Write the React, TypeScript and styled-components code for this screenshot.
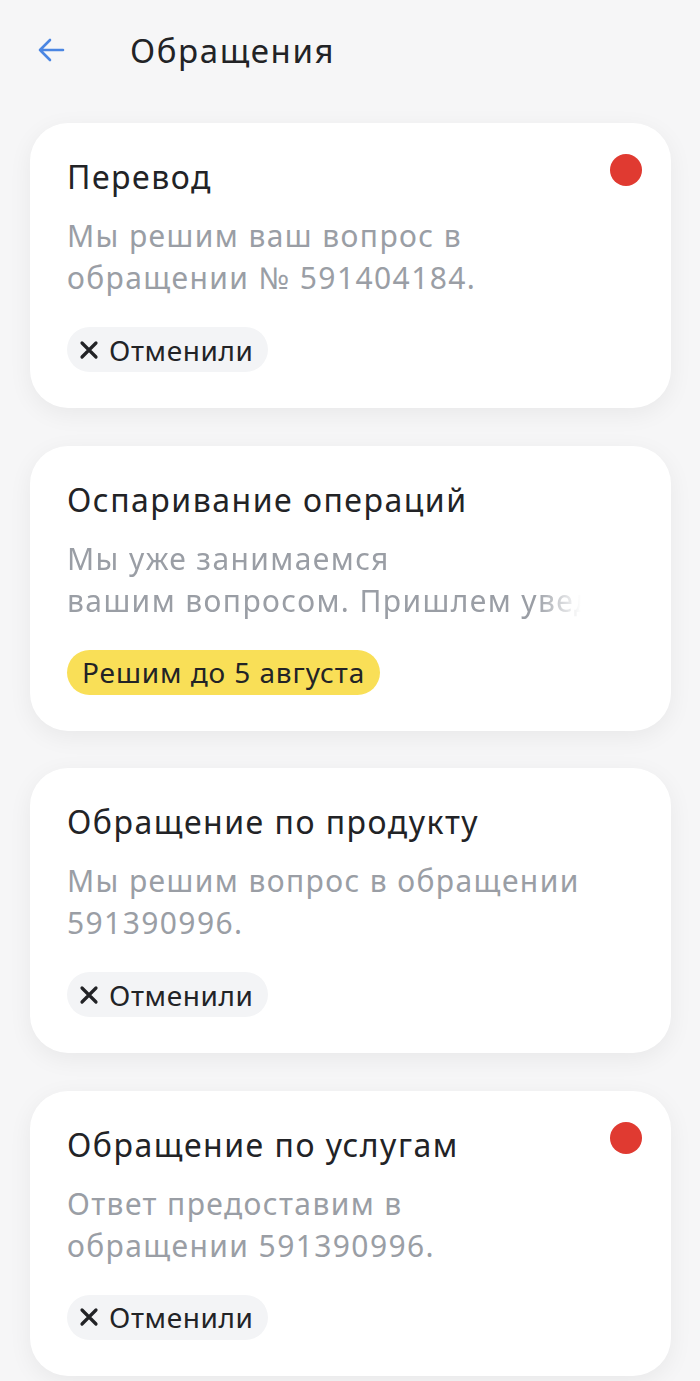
import styled, { createGlobalStyle } from "styled-components";

const GlobalStyle = createGlobalStyle`
    html, body {
        margin: 0;
        padding: 0;
        background-color: #F6F6F7;
    }

    body {
        font-family: "Noto Sans", Roboto, "Liberation Sans", sans-serif;
        -webkit-font-smoothing: antialiased;
    }
`;

const Page = styled.div`
    width: 700px;
    min-height: 1381px;
    background-color: #F6F6F7;
`;

const Header = styled.header`
    display: flex;
    align-items: center;
    height: 100px;
    padding: 0 0 0 37px;
    box-sizing: border-box;
`;

const BackButton = styled.button`
    display: flex;
    align-items: center;
    justify-content: center;
    width: 28px;
    height: 28px;
    padding: 0;
    margin: 0 65px 0 0;
    border: none;
    background: none;
    color: #4B86E2;
`;

const PageTitle = styled.h1`
    margin: 0;
    font-size: 33px;
    font-weight: 400;
    letter-spacing: 1.6px;
    color: #222326;
`;

const List = styled.div`
    display: flex;
    flex-direction: column;
    gap: 37.5px;
    padding: 23px 29px 0 30px;
`;

const Card = styled.div`
    position: relative;
    background-color: #FFFFFF;
    border-radius: 38px;
    padding: 34px 36px 36px 37px;
    box-shadow: 0 6px 24px rgba(0, 0, 0, 0.06);
`;

const Title = styled.h2`
    margin: 0;
    font-size: 32px;
    line-height: 40px;
    font-weight: 400;
    letter-spacing: 1.5px;
    color: #222326;
`;

const Dot = styled.span`
    position: absolute;
    top: 31px;
    right: 29px;
    width: 32px;
    height: 32px;
    border-radius: 50%;
    background-color: #E03A31;
`;

const Description = styled.div<{ $fade?: boolean }>`
    margin-top: 18px;
    width: 514px;
    font-size: 30px;
    line-height: 42px;
    letter-spacing: 1.4px;
    color: #9A9EA5;
    overflow: hidden;
    ${({ $fade }) =>
        $fade &&
        `
        -webkit-mask-image: linear-gradient(to right, #000 calc(100% - 46px), transparent);
        mask-image: linear-gradient(to right, #000 calc(100% - 46px), transparent);
    `}
`;

const Line = styled.div`
    white-space: nowrap;
`;

const Chip = styled.div<{ $tone: "gray" | "yellow" }>`
    display: inline-flex;
    align-items: center;
    gap: 10px;
    margin-top: 28px;
    height: 45px;
    padding: 0 ${({ $tone }) => ($tone === "yellow" ? "15px" : "15px")} 0 ${({ $tone }) => ($tone === "yellow" ? "15px" : "12px")};
    border-radius: 23px;
    font-size: 28px;
    letter-spacing: ${({ $tone }) => ($tone === "yellow" ? "0.9px" : "0.6px")};
    color: #222326;
    background-color: ${({ $tone }) => ($tone === "yellow" ? "#F9DF57" : "#F3F4F6")};
`;

const ArrowIcon = () => (
    <svg width="28" height="28" viewBox="0 0 28 28" fill="none">
        <path d="M26 14H3M13 4L3 14L13 24" stroke="currentColor" strokeWidth="2.6" strokeLinecap="round" strokeLinejoin="round" />
    </svg>
);

const CrossIcon = () => (
    <svg width="20" height="20" viewBox="0 0 20 20" fill="none">
        <path d="M3 3L17 17M17 3L3 17" stroke="#222326" strokeWidth="3.2" strokeLinecap="round" />
    </svg>
);

interface Appeal {
    title: string;
    lines: string[];
    unread?: boolean;
    fade?: boolean;
    status: "cancelled" | "deadline";
    deadline?: string;
}

const appeals: Appeal[] = [
    {
        title: "Перевод",
        lines: ["Мы решим ваш вопрос в", "обращении № 591404184."],
        unread: true,
        status: "cancelled",
    },
    {
        title: "Оспаривание операций",
        lines: ["Мы уже занимаемся", "вашим вопросом. Пришлем увед"],
        fade: true,
        status: "deadline",
        deadline: "Решим до 5 августа",
    },
    {
        title: "Обращение по продукту",
        lines: ["Мы решим вопрос в обращении", "591390996."],
        status: "cancelled",
    },
    {
        title: "Обращение по услугам",
        lines: ["Ответ предоставим в", "обращении 591390996."],
        unread: true,
        status: "cancelled",
    },
];

const AppealCard = ({ appeal }: { appeal: Appeal }) => (
    <Card>
        {appeal.unread && <Dot />}
        <Title>{appeal.title}</Title>
        <Description $fade={appeal.fade}>
            {appeal.lines.map((line) => (
                <Line key={line}>{line}</Line>
            ))}
        </Description>
        {appeal.status === "cancelled" ? (
            <Chip $tone="gray">
                <CrossIcon />
                Отменили
            </Chip>
        ) : (
            <Chip $tone="yellow">{appeal.deadline}</Chip>
        )}
    </Card>
);

const App = () => {
    return (
        <Page>
            <GlobalStyle />
            <Header>
                <BackButton aria-label="Назад">
                    <ArrowIcon />
                </BackButton>
                <PageTitle>Обращения</PageTitle>
            </Header>
            <List>
                {appeals.map((appeal) => (
                    <AppealCard key={appeal.title} appeal={appeal} />
                ))}
            </List>
        </Page>
    );
};

export default App;
